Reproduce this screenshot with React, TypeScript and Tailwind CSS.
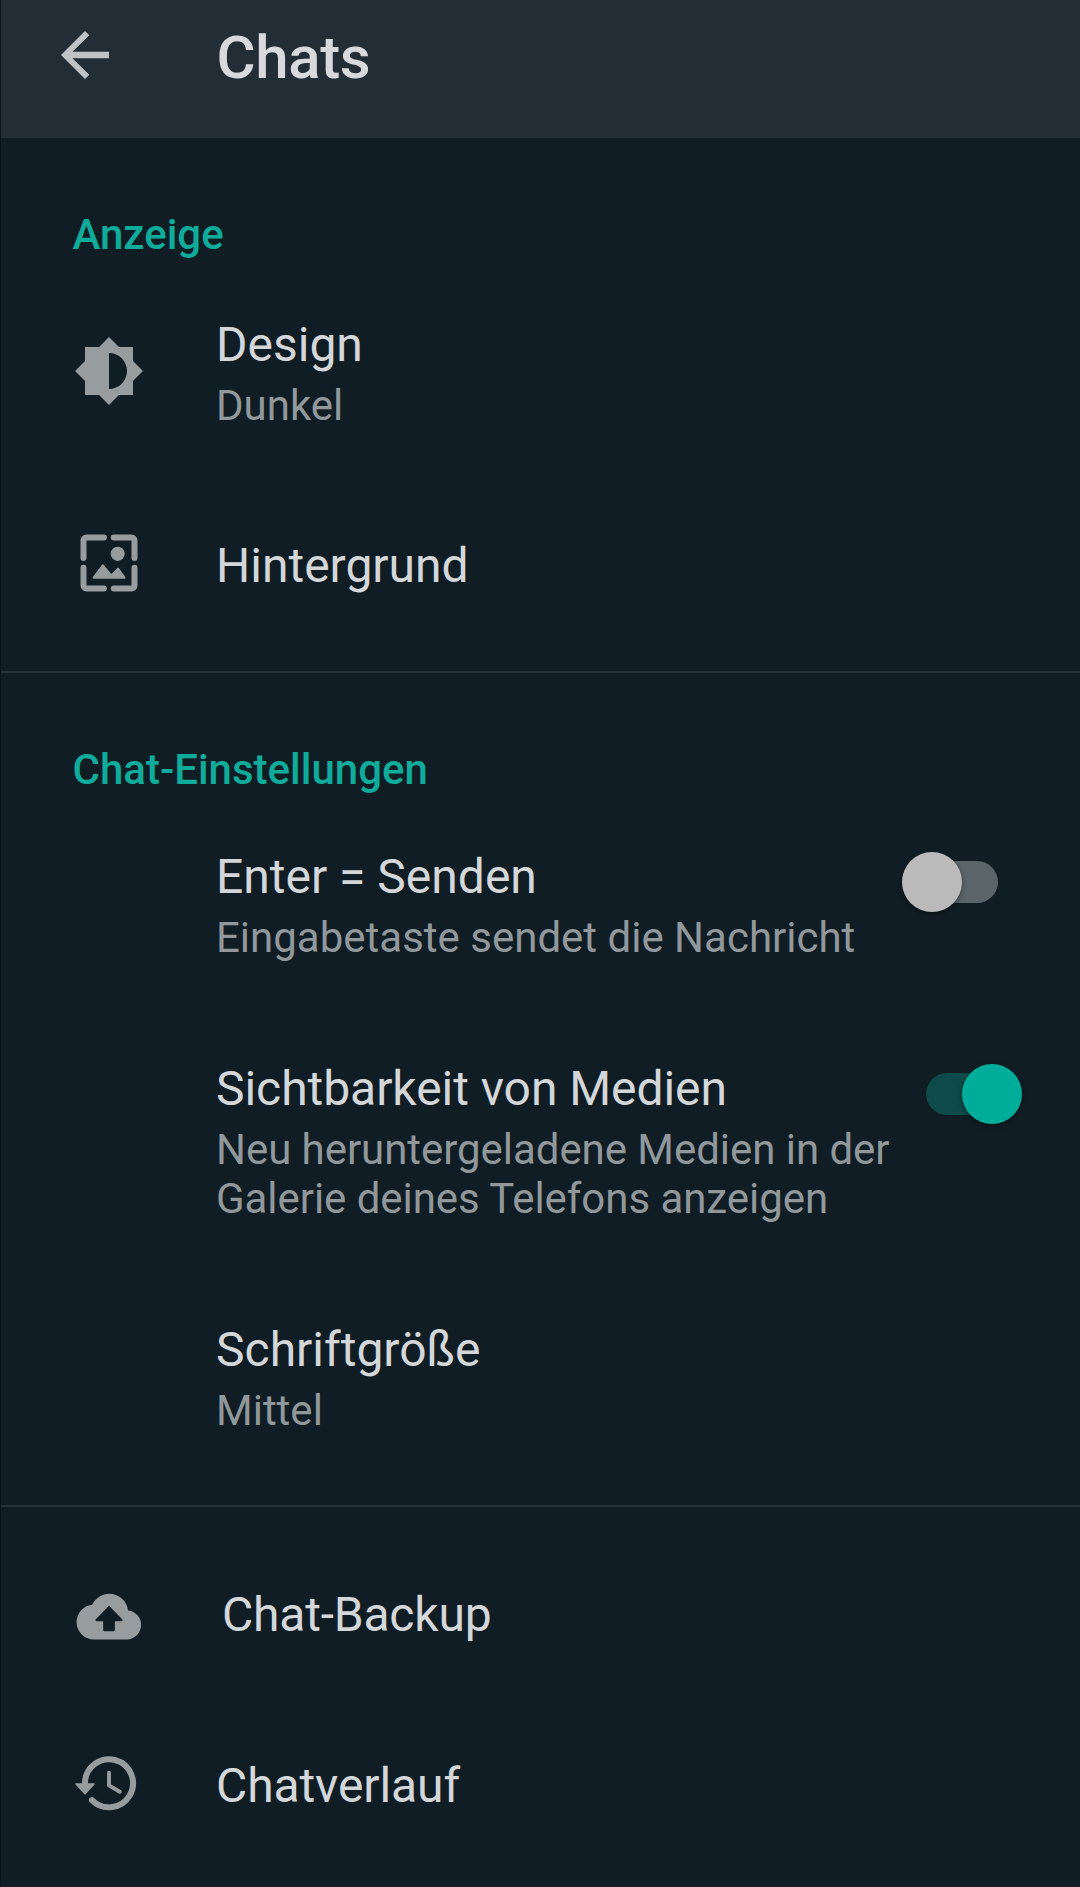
import { useState } from 'react';
import type { ReactNode } from 'react';
import clsx from 'clsx';

type SettingRowProps = {
  title: string;
  description?: string;
  icon?: ReactNode;
  action?: ReactNode;
  className?: string;
  textClassName?: string;
};

type ToggleProps = {
  label: string;
  checked: boolean;
  onChange: () => void;
  className?: string;
};

function BackIcon() {
  return (
    <svg viewBox="0 0 24 24" className="size-[72px]" fill="currentColor">
      <path d="M20 10.9H7.83l5.59-5.49L12 4l-8 8 8 8 1.41-1.41L7.83 13.1H20z" />
    </svg>
  );
}

function BrightnessIcon() {
  return (
    <svg viewBox="0 0 24 24" className="size-[72px]" fill="currentColor">
      <path d="M20 15.31 23.31 12 20 8.69V4h-4.69L12 .69 8.69 4H4v4.69L.69 12 4 15.31V20h4.69L12 23.31 15.31 20H20zM12 18V6c3.31 0 6 2.69 6 6s-2.69 6-6 6z" />
    </svg>
  );
}

function WallpaperIcon() {
  return (
    <svg viewBox="0 0 24 24" className="size-[72px]" fill="currentColor">
      <path
        d="M3.5 10.3V4.5a1 1 0 0 1 1-1h5.8M13.6 3.5h5.9a1 1 0 0 1 1 1v5.8M20.5 13.6v5.9a1 1 0 0 1-1 1h-5.9M10.3 20.5H4.5a1 1 0 0 1-1-1v-5.9"
        fill="none"
        stroke="currentColor"
        strokeWidth="2"
        strokeLinecap="round"
      />
      <circle cx="14.9" cy="8.95" r="2.35" />
      <path
        d="m6.9 16.9 3.05-4.1 2.85 3.4 2.2-2.3 2.15 3z"
        stroke="currentColor"
        strokeWidth=".7"
        strokeLinejoin="round"
      />
    </svg>
  );
}

function CloudUploadIcon() {
  return (
    <svg viewBox="0 0 24 24" className="size-[72px]" fill="currentColor">
      <path
        fillRule="evenodd"
        d="M7 19.8a5.8 5.8 0 0 1-.6-11.57a6.3 6.3 0 0 1 11.95 1.9a4.85 4.85 0 0 1-.35 9.67zM12 8.55l-4.4 4.5a.4.4 0 0 0 .3.7h2.15v2.95a.4.4 0 0 0 .4.4h3.1a.4.4 0 0 0 .4-.4v-2.95h2.15a.4.4 0 0 0 .3-.7z"
      />
    </svg>
  );
}

function HistoryIcon() {
  return (
    <svg viewBox="0 0 24 24" className="size-[72px]" fill="none" stroke="currentColor" strokeLinecap="round">
      <path d="M4 12.6V12a8 8 0 1 1 2.3 5.7" strokeWidth="2" />
      <path d="M12 8.6v4.2l3.6 2.1" strokeWidth="1.3" strokeLinejoin="round" />
      <path d="M1 12.3h6l-3 3.3z" fill="currentColor" strokeWidth=".5" strokeLinejoin="round" />
    </svg>
  );
}

function Toggle({ label, checked, onChange, className }: ToggleProps) {
  return (
    <button
      type="button"
      role="switch"
      aria-checked={checked}
      aria-label={label}
      onClick={onChange}
      className={clsx('flex h-[60px] w-24 shrink-0 items-center', className)}
    >
      <span
        className={clsx(
          'flex h-[42px] w-24 items-center rounded-full',
          checked ? 'justify-end bg-[#0d4a49]' : 'justify-start bg-[#5b6469]',
        )}
      >
        <span
          className={clsx(
            'size-[60px] shrink-0 rounded-full shadow-[0_2px_5px_rgba(0,0,0,0.4)]',
            checked ? 'bg-[#00ad9a]' : 'bg-[#bababa]',
          )}
        />
      </span>
    </button>
  );
}

function SectionTitle({ children }: { children: ReactNode }) {
  return <h2 className="pl-[71.5px] text-[42px] leading-[49px] font-medium text-[#0fab9b]">{children}</h2>;
}

function SettingRow({ title, description, icon, action, className, textClassName }: SettingRowProps) {
  return (
    <div className={clsx('flex items-start pl-[71.5px]', className)}>
      <div className="w-[72px] shrink-0 text-[#979c9f]">{icon}</div>
      <div className={clsx('w-[690px] shrink-0 whitespace-pre', textClassName ?? 'pl-[71.5px]')}>
        <p className="text-[48px] leading-[57px] text-[#d4d7d9]">{title}</p>
        {description && <p className="mt-2 text-[42px] leading-[49px] text-[#90989b]">{description}</p>}
      </div>
      {action}
    </div>
  );
}

function App() {
  const [enterToSend, setEnterToSend] = useState(false);
  const [mediaVisible, setMediaVisible] = useState(true);

  return (
    <main className="h-[1887px] w-[1080px] overflow-hidden border-l border-[#08131a] bg-[#101d24] font-[Roboto,sans-serif]">
      <header className="flex h-[138px] items-start bg-[#232d36] pt-[18.5px] pl-[47.5px]">
        <button type="button" aria-label="Zurück" className="text-[#bfc3c6]">
          <BackIcon />
        </button>
        <h1 className="pl-[96px] text-[60px] leading-[77px] font-medium tracking-[-0.4px] text-[#d7d9dc]">Chats</h1>
      </header>

      <section className="h-[533px] pt-[72px]">
        <SectionTitle>Anzeige</SectionTitle>
        <SettingRow
          className="mt-[57px]"
          title="Design"
          description="Dunkel"
          icon={
            <div className="pt-[18.5px]">
              <BrightnessIcon />
            </div>
          }
        />
        <SettingRow
          className="mt-[97px]"
          textClassName="pt-[10px] pl-[71.5px]"
          title="Hintergrund"
          icon={<WallpaperIcon />}
        />
      </section>

      <section className="h-[834px] border-t-2 border-[#26333a] pt-[72px]">
        <SectionTitle>Chat-Einstellungen</SectionTitle>
        <SettingRow
          className="mt-[54px]"
          title="Enter = Senden"
          description="Eingabetaste sendet die Nachricht"
          action={
            <Toggle
              label="Enter = Senden"
              checked={enterToSend}
              onChange={() => setEnterToSend(!enterToSend)}
              className="mt-[4px] ml-[67px]"
            />
          }
        />
        <SettingRow
          className="mt-[98px]"
          textClassName="pl-[71.5px] tracking-[-0.05px]"
          title="Sichtbarkeit von Medien"
          description={'Neu heruntergeladene Medien in der\nGalerie deines Telefons anzeigen'}
          action={
            <Toggle
              label="Sichtbarkeit von Medien"
              checked={mediaVisible}
              onChange={() => setMediaVisible(!mediaVisible)}
              className="mt-[4px] ml-[91px]"
            />
          }
        />
        <SettingRow className="mt-[98px]" title="Schriftgröße" description="Mittel" />
      </section>

      <section className="border-t-2 border-[#26333a] pt-[73px]">
        <SettingRow
          title="Chat-Backup"
          textClassName="pt-[6px] pl-[77.5px] tracking-[-0.2px]"
          icon={<CloudUploadIcon />}
        />
        <SettingRow
          className="mt-[95px]"
          textClassName="pt-[10px] pl-[71.5px] tracking-[-0.1px]"
          title="Chatverlauf"
          icon={<HistoryIcon />}
        />
      </section>
    </main>
  );
}

export default App;
